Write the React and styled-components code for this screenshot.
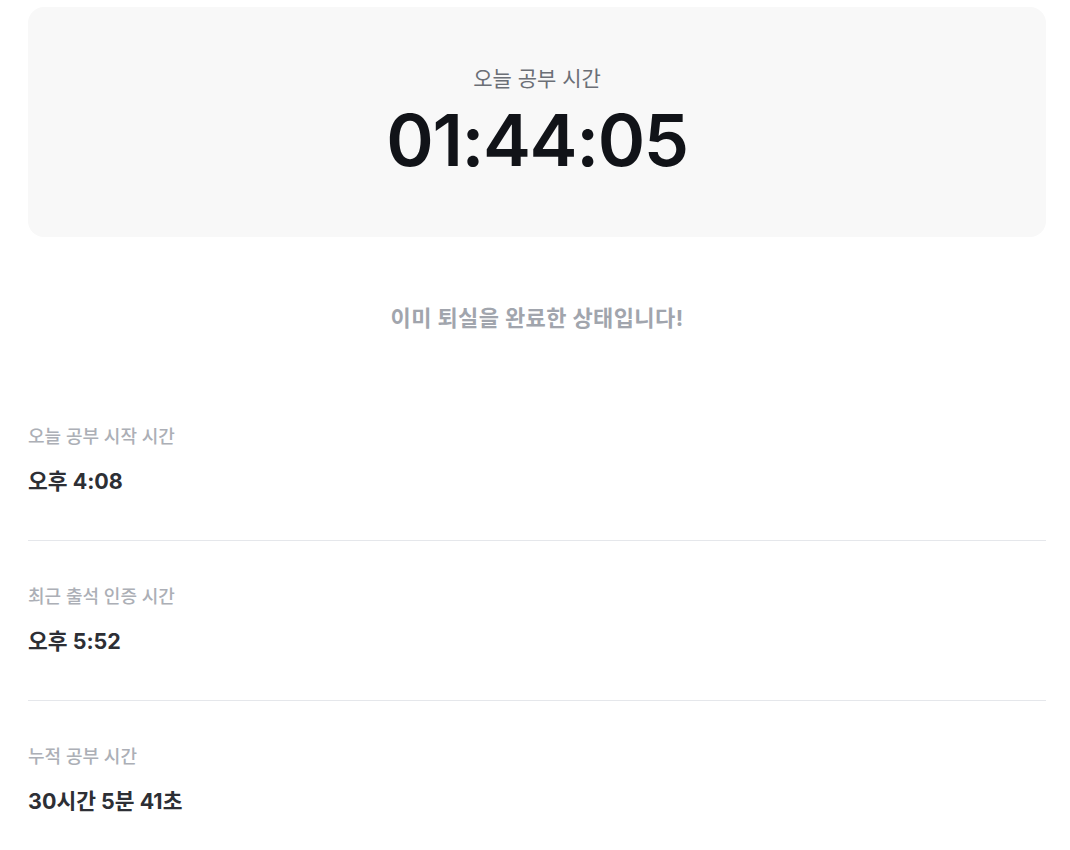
import React from "react";
import styled, { createGlobalStyle } from "styled-components";

const GlobalStyle = createGlobalStyle`
  * {
    box-sizing: border-box;
  }
  body {
    margin: 0;
    background: #ffffff;
    font-family: Inter, "Noto Sans CJK KR", sans-serif;
  }
`;

const Page = styled.div`
  width: 100%;
  padding: 7px 24px 0 28px;
  display: flex;
  flex-direction: column;
`;

const TimerCard = styled.div`
  background: #f8f8f8;
  border-radius: 16px;
  height: 230px;
  padding-top: 58px;
  display: flex;
  flex-direction: column;
  align-items: center;
`;

const TimerLabel = styled.div`
  font-size: 21px;
  line-height: 28px;
  font-weight: 400;
  color: #6b6f76;
`;

const TimerValue = styled.div`
  margin-top: 11px;
  font-size: 72px;
  line-height: 72px;
  font-weight: 600;
  color: #111318;
  letter-spacing: -1.4px;
`;

const Message = styled.p`
  margin: 67px 0 0;
  text-align: center;
  font-size: 22px;
  line-height: 28px;
  font-weight: 700;
  letter-spacing: 0.4px;
  color: #a1a5ad;
`;

const InfoList = styled.div`
  margin-top: 49px;
  display: flex;
  flex-direction: column;
`;

const InfoRow = styled.div`
  padding: 44px 0 45px;
  display: flex;
  flex-direction: column;
  gap: 18px;
  border-bottom: ${({ $last }) => ($last ? "none" : "1px solid #e5e7eb")};
`;

const InfoLabel = styled.div`
  font-size: 18px;
  line-height: 24px;
  font-weight: 500;
  color: #acafb6;
`;

const InfoValue = styled.div`
  font-size: 21.5px;
  line-height: 28px;
  font-weight: 700;
  color: #2d2f35;
`;

const rows = [
  { label: "오늘 공부 시작 시간", value: "오후 4:08" },
  { label: "최근 출석 인증 시간", value: "오후 5:52" },
  { label: "누적 공부 시간", value: "30시간 5분 41초" },
];

const App = () => {
  return (
    <>
      <GlobalStyle />
      <Page>
        <TimerCard>
          <TimerLabel>오늘 공부 시간</TimerLabel>
          <TimerValue>01:44:05</TimerValue>
        </TimerCard>

        <Message>이미 퇴실을 완료한 상태입니다!</Message>

        <InfoList>
          {rows.map((row, i) => (
            <InfoRow key={row.label} $last={i === rows.length - 1}>
              <InfoLabel>{row.label}</InfoLabel>
              <InfoValue>{row.value}</InfoValue>
            </InfoRow>
          ))}
        </InfoList>
      </Page>
    </>
  );
};

export default App;
